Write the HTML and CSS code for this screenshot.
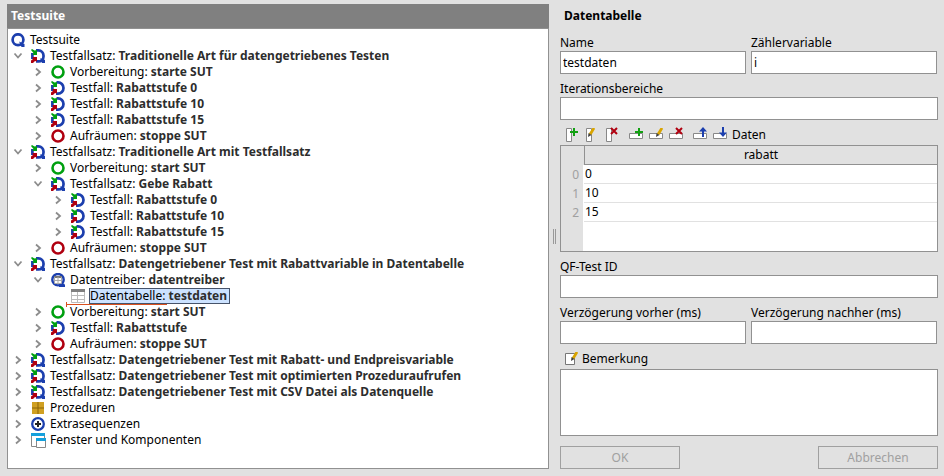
FILE: index.html
```
<!DOCTYPE html>
<html lang="de">
<head>
<meta charset="utf-8">
<title>Testsuite</title>
<link rel="stylesheet" href="styles.css">
</head>
<body>
<svg class="sprite" aria-hidden="true">
  <symbol id="right" viewBox="0 0 14 14"><path d="M5 3.500l4 3.500l-4 3.500" fill="none" stroke="#8c8c8c" stroke-width="1.800"/></symbol>
  <symbol id="down" viewBox="0 0 14 14"><path d="M3.500 4.500l3.500 4l3.500 -4" fill="none" stroke="#8c8c8c" stroke-width="1.800"/></symbol>
  <symbol id="suite" viewBox="0 0 14 14"><circle cx="7" cy="6.700" r="5.400" fill="none" stroke="#1c3fae" stroke-width="2.700"/><path d="M8 8.500l5.500 2.500v3h-3z" fill="#1c3fae"/></symbol>
  <symbol id="set" viewBox="0 0 14 14"><path d="M5 1.400h2.500a5 5 0 0 1 5 5v1a5 5 0 0 1-5 5h-2.500M1.400 4v6" fill="none" stroke="#1c3fae" stroke-width="2.700"/><path d="M9 9.500h2l3 1.500v3h-3z" fill="#1c3fae"/><path d="M0 1l1-1l2.500 1.500l2.500-.5v5h-4.500l1-2z" fill="#00a010"/><path d="M1.500 8h4.500v4.500l-2-.5l-2 2h-2v-2.500l2-1.500z" fill="#b00010"/></symbol>
  <symbol id="case" viewBox="0 0 14 14"><path d="M5.500 1.400h1.500a5.500 5.600 0 0 1 0 11.200h-2M1.400 4v6" fill="none" stroke="#1c3fae" stroke-width="2.700"/><path d="M0 1l1-1l2.500 1.500l2.500-.5v5h-4.500l1-2z" fill="#00a010"/><path d="M1.500 8h4.500v4.500l-2-.5l-2 2h-2v-2.500l2-1.500z" fill="#b00010"/></symbol>
  <symbol id="setup" viewBox="0 0 14 14"><circle cx="7" cy="7" r="5.500" fill="none" stroke="#00a010" stroke-width="2.600"/></symbol>
  <symbol id="cleanup" viewBox="0 0 14 14"><circle cx="7" cy="7" r="5.500" fill="none" stroke="#b00010" stroke-width="2.600"/></symbol>
  <symbol id="driver" viewBox="0 0 14 14"><circle cx="7" cy="6.700" r="5.700" fill="#fff" stroke="#1c3fae" stroke-width="2.400"/><path d="M8 11.500l5-1l1 1.500v2h-6z" fill="#1c3fae"/><path d="M3 3h8v2h-8z" fill="#777"/><path d="M3.500 4v6.500h7v-6.500M7 4v6M3.500 7.500h7" fill="none" stroke="#aaa"/></symbol>
  <symbol id="table" viewBox="0 0 14 14"><path d="M.5 1v12.500h13v-12.500M6.500 3v10M1 6.500h13M1 10.500h13" fill="none" stroke="#bbb"/><path d="M0 0h14v3h-14z" fill="#808080"/></symbol>
  <symbol id="procs" viewBox="0 0 14 14"><path d="M1 1h12v12h-12z" fill="#d0a022"/><path d="M7 1v12M1 7h12" stroke="#8a6508"/></symbol>
  <symbol id="extras" viewBox="0 0 14 14"><circle cx="7" cy="7" r="5.800" fill="#fff" stroke="#1c3fae" stroke-width="2.300"/><path d="M7 4v6M4 7h6" stroke="#222" stroke-width="2"/></symbol>
  <symbol id="windows" viewBox="0 0 14 14"><path d="M.5 1v12.500h5M13.500 1v4" fill="none" stroke="#888"/><path d="M0 0h14v3h-14z" fill="#14a0dc"/></symbol>
  <symbol id="col" viewBox="0 0 14 16"><path d="M1.500 1.500h5v13h-5z" fill="#fff" stroke="#888"/></symbol>
  <symbol id="row" viewBox="0 0 14 16"><path d="M.5 6.500h13v5h-13z" fill="#fff" stroke="#888"/></symbol>
  <symbol id="plus" viewBox="0 0 8 8"><path d="M4 0v8M0 4h8" stroke="#12a012" stroke-width="2"/></symbol>
  <symbol id="cross" viewBox="0 0 8 8"><path d="M1 1l6 6M7 1l-6 6" stroke="#b00010" stroke-width="2"/></symbol>
  <symbol id="pencil" viewBox="0 0 8 10"><path d="M7 0L3 6.500" stroke="#d9a400" stroke-width="2.800"/><path d="M1 9l.5-4l3 2z" fill="#444"/></symbol>
  <symbol id="arrow" viewBox="0 0 8 10"><path d="M4 0l4 4.500h-3v5.500h-2v-5.500h-3z" fill="#1c3fae"/></symbol>
</svg>
<main class="app">
  <section class="suite">
    <h1 class="suite-title">Testsuite</h1>
    <div class="tree">
      <div class="node"><svg class="icon"><use href="#suite"/></svg><span class="text">Testsuite</span></div>
      <ul class="branch">
        <li><div class="node"><button class="toggle" aria-label="Zuklappen"><svg><use href="#down"/></svg></button><svg class="icon"><use href="#set"/></svg><span class="text">Testfallsatz: <b>Traditionelle Art für datengetriebenes Testen</b></span></div>
          <ul class="branch sub">
            <li class="node"><button class="toggle" aria-label="Aufklappen"><svg><use href="#right"/></svg></button><svg class="icon"><use href="#setup"/></svg><span class="text">Vorbereitung: <b>starte SUT</b></span></li>
            <li class="node"><button class="toggle" aria-label="Aufklappen"><svg><use href="#right"/></svg></button><svg class="icon"><use href="#case"/></svg><span class="text">Testfall: <b>Rabattstufe 0</b></span></li>
            <li class="node"><button class="toggle" aria-label="Aufklappen"><svg><use href="#right"/></svg></button><svg class="icon"><use href="#case"/></svg><span class="text">Testfall: <b>Rabattstufe 10</b></span></li>
            <li class="node"><button class="toggle" aria-label="Aufklappen"><svg><use href="#right"/></svg></button><svg class="icon"><use href="#case"/></svg><span class="text">Testfall: <b>Rabattstufe 15</b></span></li>
            <li class="node"><button class="toggle" aria-label="Aufklappen"><svg><use href="#right"/></svg></button><svg class="icon"><use href="#cleanup"/></svg><span class="text">Aufräumen: <b>stoppe SUT</b></span></li>
          </ul>
        </li>
        <li><div class="node"><button class="toggle" aria-label="Zuklappen"><svg><use href="#down"/></svg></button><svg class="icon"><use href="#set"/></svg><span class="text">Testfallsatz: <b>Traditionelle Art mit Testfallsatz</b></span></div>
          <ul class="branch sub">
            <li class="node"><button class="toggle" aria-label="Aufklappen"><svg><use href="#right"/></svg></button><svg class="icon"><use href="#setup"/></svg><span class="text">Vorbereitung: <b>start SUT</b></span></li>
            <li><div class="node"><button class="toggle" aria-label="Zuklappen"><svg><use href="#down"/></svg></button><svg class="icon"><use href="#set"/></svg><span class="text">Testfallsatz: <b>Gebe Rabatt</b></span></div>
              <ul class="branch sub">
                <li class="node"><button class="toggle" aria-label="Aufklappen"><svg><use href="#right"/></svg></button><svg class="icon"><use href="#case"/></svg><span class="text">Testfall: <b>Rabattstufe 0</b></span></li>
                <li class="node"><button class="toggle" aria-label="Aufklappen"><svg><use href="#right"/></svg></button><svg class="icon"><use href="#case"/></svg><span class="text">Testfall: <b>Rabattstufe 10</b></span></li>
                <li class="node"><button class="toggle" aria-label="Aufklappen"><svg><use href="#right"/></svg></button><svg class="icon"><use href="#case"/></svg><span class="text">Testfall: <b>Rabattstufe 15</b></span></li>
              </ul>
            </li>
            <li class="node"><button class="toggle" aria-label="Aufklappen"><svg><use href="#right"/></svg></button><svg class="icon"><use href="#cleanup"/></svg><span class="text">Aufräumen: <b>stoppe SUT</b></span></li>
          </ul>
        </li>
        <li><div class="node"><button class="toggle" aria-label="Zuklappen"><svg><use href="#down"/></svg></button><svg class="icon"><use href="#set"/></svg><span class="text">Testfallsatz: <b>Datengetriebener Test mit Rabattvariable in Datentabelle</b></span></div>
          <ul class="branch sub">
            <li><div class="node"><button class="toggle" aria-label="Zuklappen"><svg><use href="#down"/></svg></button><svg class="icon"><use href="#driver"/></svg><span class="text">Datentreiber: <b>datentreiber</b></span></div>
              <ul class="branch sub">
                <li class="node leaf"><svg class="icon"><use href="#table"/></svg><span class="text selected">Datentabelle: <b>testdaten</b></span><span class="insert-mark"></span></li>
              </ul>
            </li>
            <li class="node"><button class="toggle" aria-label="Aufklappen"><svg><use href="#right"/></svg></button><svg class="icon"><use href="#setup"/></svg><span class="text">Vorbereitung: <b>start SUT</b></span></li>
            <li class="node"><button class="toggle" aria-label="Aufklappen"><svg><use href="#right"/></svg></button><svg class="icon"><use href="#case"/></svg><span class="text">Testfall: <b>Rabattstufe</b></span></li>
            <li class="node"><button class="toggle" aria-label="Aufklappen"><svg><use href="#right"/></svg></button><svg class="icon"><use href="#cleanup"/></svg><span class="text">Aufräumen: <b>stoppe SUT</b></span></li>
          </ul>
        </li>
        <li class="node"><button class="toggle" aria-label="Aufklappen"><svg><use href="#right"/></svg></button><svg class="icon"><use href="#set"/></svg><span class="text">Testfallsatz: <b>Datengetriebener Test mit Rabatt- und Endpreisvariable</b></span></li>
        <li class="node"><button class="toggle" aria-label="Aufklappen"><svg><use href="#right"/></svg></button><svg class="icon"><use href="#set"/></svg><span class="text">Testfallsatz: <b>Datengetriebener Test mit optimierten Prozeduraufrufen</b></span></li>
        <li class="node"><button class="toggle" aria-label="Aufklappen"><svg><use href="#right"/></svg></button><svg class="icon"><use href="#set"/></svg><span class="text">Testfallsatz: <b>Datengetriebener Test mit CSV Datei als Datenquelle</b></span></li>
        <li class="node"><button class="toggle" aria-label="Aufklappen"><svg><use href="#right"/></svg></button><svg class="icon"><use href="#procs"/></svg><span class="text">Prozeduren</span></li>
        <li class="node"><button class="toggle" aria-label="Aufklappen"><svg><use href="#right"/></svg></button><svg class="icon"><use href="#extras"/></svg><span class="text">Extrasequenzen</span></li>
        <li class="node"><button class="toggle" aria-label="Aufklappen"><svg><use href="#right"/></svg></button><svg class="icon"><use href="#windows"/><path d="M5.500 5.500h9v9h-9z" fill="#fff" stroke="#888"/><path d="M5 5h10v3h-10z" fill="#14a0dc"/></svg><span class="text">Fenster und Komponenten</span></li>
      </ul>
    </div>
  </section>
  <div class="splitter"><span class="grip"></span></div>
  <form class="details">
    <h2 class="details-title">Datentabelle</h2>
    <div class="pair">
      <div class="field"><label for="name">Name</label><input id="name" type="text" value="testdaten"></div>
      <div class="field"><label for="counter">Zählervariable</label><input id="counter" type="text" value="i"></div>
    </div>
    <div class="field"><label for="ranges">Iterationsbereiche</label><input id="ranges" type="text"></div>
    <div class="toolbar">
      <div class="tools">
        <button type="button" aria-label="Spalte einfügen"><svg viewBox="0 0 14 16"><use href="#col" width="14" height="16"/><use href="#plus" x="5" y="1" width="8" height="8"/></svg></button>
        <button type="button" aria-label="Spalte bearbeiten"><svg viewBox="0 0 14 16"><use href="#col" width="14" height="16"/><use href="#pencil" x="2" y="1" width="8" height="10"/></svg></button>
        <button type="button" aria-label="Spalte löschen"><svg viewBox="0 0 14 16"><use href="#col" width="14" height="16"/><use href="#cross" x="5" width="8" height="8"/></svg></button>
      </div>
      <div class="tools">
        <button type="button" aria-label="Zeile einfügen"><svg viewBox="0 0 14 16"><use href="#row" width="14" height="16"/><use href="#plus" x="6" y="1" width="8" height="8"/></svg></button>
        <button type="button" aria-label="Zeile bearbeiten"><svg viewBox="0 0 14 16"><use href="#row" width="14" height="16"/><use href="#pencil" x="6" y="1" width="8" height="10"/></svg></button>
        <button type="button" aria-label="Zeile löschen"><svg viewBox="0 0 14 16"><use href="#row" width="14" height="16"/><use href="#cross" x="6" width="8" height="8"/></svg></button>
      </div>
      <div class="tools">
        <button type="button" aria-label="Zeile nach oben"><svg viewBox="0 0 14 16"><use href="#row" width="14" height="16"/><use href="#arrow" x="6" width="8" height="10"/></svg></button>
        <button type="button" aria-label="Zeile nach unten"><svg viewBox="0 0 14 16"><use href="#row" width="14" height="16"/><use href="#arrow" width="8" height="10" transform="translate(14 10) rotate(180)"/></svg></button>
      </div>
      <span id="data-label">Daten</span>
    </div>
    <div class="grid">
      <table aria-labelledby="data-label">
        <thead><tr><td class="corner"></td><th scope="col">rabatt</th></tr></thead>
        <tbody>
          <tr><th scope="row">0</th><td>0</td></tr>
          <tr><th scope="row">1</th><td>10</td></tr>
          <tr><th scope="row">2</th><td>15</td></tr>
        </tbody>
      </table>
    </div>
    <div class="field"><label for="qfid">QF-Test ID</label><input id="qfid" type="text"></div>
    <div class="pair">
      <div class="field"><label for="before">Verzögerung vorher (ms)</label><input id="before" type="text"></div>
      <div class="field"><label for="after">Verzögerung nachher (ms)</label><input id="after" type="text"></div>
    </div>
    <div class="remark">
      <button type="button" aria-label="Bemerkung bearbeiten"><svg viewBox="0 0 14 16"><path d="M.5 2.500h9v11h-9z" fill="#fff" stroke="#777"/><use href="#pencil" x="5" y="1" width="8" height="10"/></svg></button>
      <label for="remark">Bemerkung</label>
    </div>
    <textarea id="remark"></textarea>
    <div class="actions">
      <button type="submit" disabled>OK</button>
      <button type="button" disabled>Abbrechen</button>
    </div>
  </form>
</main>
</body>
</html>
```
FILE: styles.css
```
* { box-sizing: border-box; }
body {
  margin: 0;
  background: #e1e1e1;
  color: #000;
  font: 12px/16px "Noto Sans", "Open Sans", sans-serif;
}
button, input, textarea { font: inherit; color: inherit; }
.sprite { position: absolute; width: 0; height: 0; }
.app {
  display: grid;
  grid-template-columns: 542fr 11px 378fr;
  min-height: 100vh;
  padding: 4px 6px 7px 7px;
}
.suite { display: flex; flex-direction: column; min-width: 0; }
.suite-title {
  margin: 0;
  padding: 4px;
  background: #808080;
  color: #fff;
  font-size: 12px;
  line-height: 16px;
}
.tree {
  flex: 1;
  padding: 3px;
  background: #fff;
  border: 1px solid #919191;
  white-space: nowrap;
}
.branch { margin: 0; padding: 0; list-style: none; }
.sub { padding-left: 20px; }
.node { display: flex; align-items: center; height: 16px; position: relative; }
.icon { flex: none; width: 14px; height: 14px; margin-right: 5px; overflow: visible; }
.toggle {
  flex: none;
  width: 14px;
  height: 14px;
  margin-right: 6px;
  padding: 0;
  border: 0;
  background: none;
}
.toggle svg { display: block; width: 14px; height: 14px; }
.leaf { padding-left: 20px; }
.text b { color: #2d2d2d; }
.selected {
  height: 16px;
  margin-left: -1px;
  padding-right: 2px;
  line-height: 14px;
  background: #cce2ff;
  border: 1px solid #46536a;
}
.insert-mark {
  position: absolute;
  left: 15px;
  bottom: -1px;
  width: 101px;
  height: 1px;
  background: #d9501e;
}
.insert-mark::before {
  content: "";
  position: absolute;
  top: -2px;
  width: 1px;
  height: 5px;
  background: #d9501e;
}
.splitter { display: grid; place-items: center; }
.grip { width: 3px; height: 15px; border: solid #999; border-width: 0 1px; }
.details { display: flex; flex-direction: column; min-width: 0; }
.details-title { margin: 0; padding: 4px; font-size: 12px; line-height: 16px; }
.pair { display: grid; grid-template-columns: 1fr 1fr; gap: 5px; padding-right: 1px; }
.field { display: flex; flex-direction: column; min-width: 0; }
.field label { padding-top: 7px; }
.field input {
  width: 100%;
  height: 23px;
  padding: 0 2px;
  background: #fff;
  border: 1px solid #919191;
  border-radius: 0;
}
.toolbar { display: flex; align-items: center; gap: 5px; height: 25px; padding: 5px 5px 0; }
.tools { display: flex; gap: 6px; }
.tools + .tools { margin-left: 5px; }
.toolbar button, .remark button { width: 14px; height: 16px; padding: 0; border: 0; background: none; }
.toolbar svg, .remark svg { display: block; width: 14px; height: 16px; }
.grid { height: 107px; background: linear-gradient(to right, #e1e1e1 22px, #fff 22px); border: 1px solid #919191; }
table { width: 100%; border-collapse: separate; border-spacing: 0; table-layout: fixed; }
th, td { height: 19px; padding: 0 1px; font-weight: normal; text-align: left; }
thead th {
  background: #e1e1e1;
  border: solid #919191;
  border-width: 0 0 1px 1px;
  text-align: center;
}
.corner { width: 23px; background: #e1e1e1; }
tbody th { color: #a0a0a0; padding-right: 5px; text-align: right; }
tbody td { border-bottom: 1px solid #e1e1e1; }
.remark { display: flex; align-items: center; gap: 3px; height: 25px; padding: 5px 5px 0; }
textarea {
  flex: 1;
  min-height: 67px;
  padding: 2px;
  background: #fff;
  border: 1px solid #919191;
  border-radius: 0;
  resize: none;
}
.actions { display: flex; justify-content: space-between; margin-top: 10px; }
.actions button {
  width: 120px;
  height: 23px;
  padding: 0;
  background: #e1e1e1;
  border: 1px solid #a0a0a0;
  color: #a0a0a0;
}
```
